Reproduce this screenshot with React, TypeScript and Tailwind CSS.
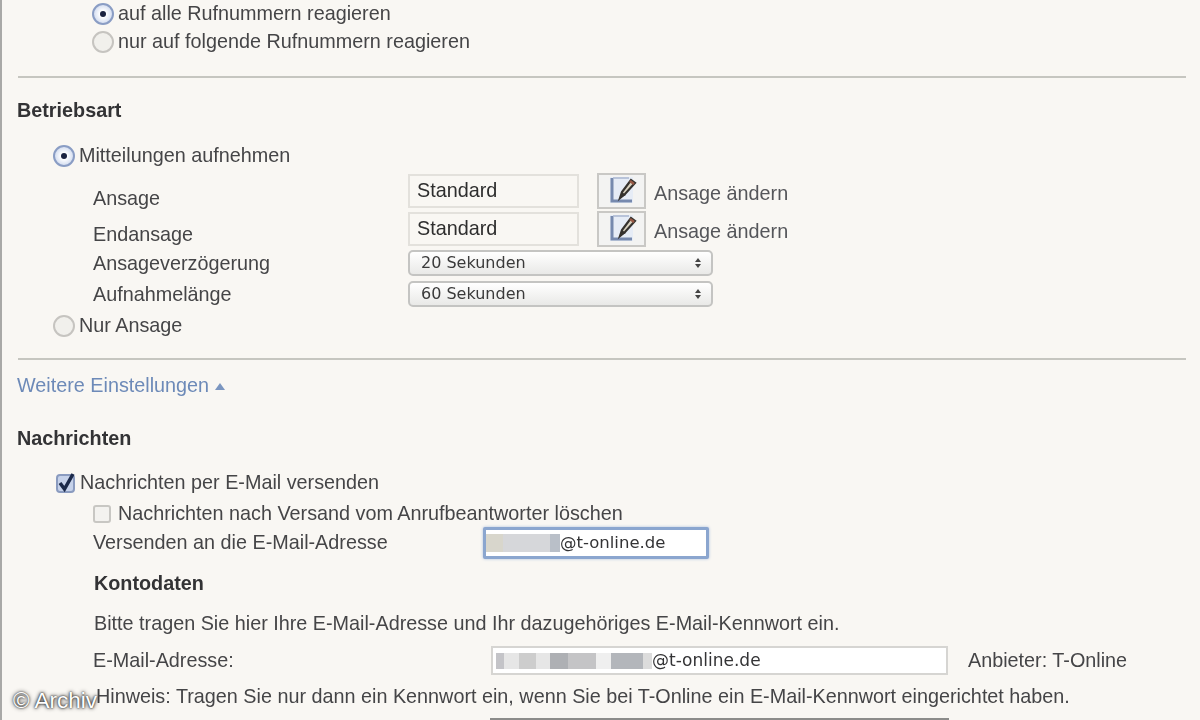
import type { ReactNode } from 'react';

const font = 'font-["Liberation_Sans",Arial,sans-serif]';

function Radio({ on }: { on?: boolean }) {
  if (on) {
    return (
      <span className="flex h-[22px] w-[22px] shrink-0 items-center justify-center rounded-full border-2 border-[#8a9dc4] bg-[radial-gradient(circle,#ffffff_25%,#bccbe8_100%)]">
        <span className="h-[6px] w-[6px] rounded-full bg-[#1b2340]" />
      </span>
    );
  }
  return <span className="h-[22px] w-[22px] shrink-0 rounded-full border-2 border-[#c6c4c0] bg-[#f1f0ec]" />;
}

function Divider() {
  return <div className="ml-4 mr-[14px] h-[2px] bg-[#c6c6c0]" />;
}

function Row({ className, children }: { className: string; children: ReactNode }) {
  return <div className={`flex items-center ${className}`}>{children}</div>;
}

function EditIcon() {
  return (
    <svg width="30" height="32" viewBox="0 0 30 32">
      <rect x="3" y="2" width="23" height="26" fill="#e6ecf6" />
      <path d="M5 3v23h20" fill="none" stroke="#7689ae" strokeWidth="3" />
      <path d="M6 3h16" stroke="#a9b6cf" strokeWidth="1.5" />
      <path d="M13 23l2-6L24 5l4 3-10 11z" fill="#d9d2c0" stroke="#35322e" strokeWidth="2.2" />
      <path d="M13 23l2-6 4 3z" fill="#35322e" />
      <path d="M23 6l4 3" stroke="#9a5a46" strokeWidth="2.5" />
    </svg>
  );
}

function AnsageRow({ label, labelClass, className }: { label: string; labelClass: string; className: string }) {
  return (
    <div className={`flex h-9 ${className}`}>
      <span className={`w-[406px] shrink-0 pl-[91px] ${labelClass}`}>{label}</span>
      <div className="mt-px flex h-[34px] w-[171px] items-center border-2 border-[#e3e1dc] pl-[7px] text-[#2e2e2e]">Standard</div>
      <div className="ml-[18px] flex h-9 w-[49px] items-center justify-center border-2 border-[#c9c8c5] bg-[#f3f3f2]">
        <EditIcon />
      </div>
      <span className="ml-[8px] flex h-9 items-center pt-[6px] text-[#55565a]">Ansage ändern</span>
    </div>
  );
}

function SelectRow({ label, value, className }: { label: string; value: string; className: string }) {
  return (
    <div className={`flex h-[26px] items-center ${className}`}>
      <span className="w-[406px] shrink-0 pl-[91px] pt-[2px]">{label}</span>
      <div className='flex h-[26px] w-[305px] items-center justify-between rounded-[5px] border-2 border-[#c4c4c2] bg-[linear-gradient(#ffffff,#e9e9e7)] pl-[11px] pr-[10px] font-["DejaVu_Sans",sans-serif] text-[16px] text-[#3a3a3a]'>
        <span>{value}</span>
        <span className="flex flex-col gap-[2px]">
          <span className="h-0 w-0 border-x-[3px] border-b-[4px] border-x-transparent border-b-[#444444]" />
          <span className="h-0 w-0 border-x-[3px] border-t-[4px] border-x-transparent border-t-[#444444]" />
        </span>
      </div>
    </div>
  );
}

function Mask({ className, blocks }: { className: string; blocks: [number, string][] }) {
  return (
    <span className={`flex shrink-0 ${className}`}>
      {blocks.map(([w, c], i) => (
        <span key={i} className="h-full" style={{ width: w, background: c }} />
      ))}
    </span>
  );
}

export default function App() {
  return (
    <div className="relative h-[720px] w-[1200px] overflow-hidden bg-[#f9f7f3]">
      <div className={`-ml-px h-full border-l-[3px] border-[#a9a9a7] ${font} text-[19.8px] text-[#454547] blur-[0.7px]`}>
        <Row className="h-7 gap-[4px] pl-[90px]"><Radio on /><span>auf alle Rufnummern reagieren</span></Row>
        <Row className="h-7 gap-[4px] pl-[90px]"><Radio /><span>nur auf folgende Rufnummern reagieren</span></Row>

        <div className="mt-5"><Divider /></div>
        <Row className="mt-[18px] h-[30px] pl-[15px] font-bold text-[#333335]">Betriebsart</Row>

        <Row className="mt-4 h-7 gap-[4px] pl-[51px]"><Radio on /><span>Mitteilungen aufnehmen</span></Row>

        <AnsageRow label="Ansage" labelClass="pt-[11px]" className="mt-[3px]" />
        <AnsageRow label="Endansage" labelClass="pt-[9px]" className="mt-[2px]" />
        <SelectRow label="Ansageverzögerung" value="20 Sekunden" className="mt-[3px]" />
        <SelectRow label="Aufnahmelänge" value="60 Sekunden" className="mt-[5px]" />

        <Row className="mt-[5px] h-7 gap-[4px] pl-[51px]"><Radio /><span>Nur Ansage</span></Row>

        <div className="mt-[18px]"><Divider /></div>

        <Row className="mt-[12px] h-7 gap-[6px] pl-[15px] text-[#6d8ab8]">
          <span>Weitere Einstellungen</span>
          <span className="h-0 w-0 border-x-[5px] border-b-[7px] border-x-transparent border-b-[#7b96c0]" />
        </Row>

        <Row className="mt-[25px] h-7 pl-[15px] font-bold text-[#333335]">Nachrichten</Row>

        <Row className="mt-4 h-7 gap-[5px] pl-[54px]">
          <span className="relative h-[19px] w-[19px] shrink-0 rounded-[4px] border-2 border-[#8a9bbf] bg-[#c6d2ea]">
            <svg className="absolute -left-px -top-[5px]" width="22" height="24" viewBox="0 0 22 24">
              <path d="M3 12l4.500 6L16 3" fill="none" stroke="#1c2a4a" strokeWidth="3.500" />
            </svg>
          </span>
          <span>Nachrichten per E-Mail versenden</span>
        </Row>
        <Row className="mt-1 h-[26px] gap-[7px] pl-[91px]">
          <span className="h-[18px] w-[18px] shrink-0 rounded-[3px] border-2 border-[#c8c7c3] bg-[#f3f2ef]" />
          <span>Nachrichten nach Versand vom Anrufbeantworter löschen</span>
        </Row>
        <Row className="h-8">
          <span className="w-[481px] shrink-0 pl-[91px]">Versenden an die E-Mail-Adresse</span>
          <div className="flex h-8 w-[226px] items-center rounded-[2px] border-[3px] border-[#8ba6cf] bg-white text-[#333335] shadow-[0_0_3px_#a9bede]">
            <Mask className="h-[18px]" blocks={[[17, '#d8d6cc'], [47, '#d6d7da'], [10, '#b9bfc8']]} />
            <span className='font-["DejaVu_Sans",sans-serif] text-[16.5px]'>@t-online.de</span>
          </div>
        </Row>

        <Row className="mt-[11px] h-7 pl-[92px] font-bold text-[#333335]">Kontodaten</Row>
        <Row className="mt-3 h-7 pl-[92px]">Bitte tragen Sie hier Ihre E-Mail-Adresse und Ihr dazugehöriges E-Mail-Kennwort ein.</Row>

        <Row className="mt-2 h-[29px]">
          <span className="w-[489px] shrink-0 pl-[91px] pt-px">E-Mail-Adresse:</span>
          <div className="flex h-[29px] w-[457px] items-center border-2 border-[#d6d5d2] bg-white pl-[3px] text-[#333335]">
            <Mask className="h-[16px]" blocks={[[8, '#c4c4c8'], [15, '#e6e6e6'], [17, '#cdcdcd'], [14, '#e6e6e6'], [18, '#aeb0b4'], [28, '#c4c4c6'], [15, '#efefef'], [32, '#b3b6bb'], [9, '#dcdcdc']]} />
            <span className='font-["DejaVu_Sans",sans-serif] text-[17px]'>@t-online.de</span>
          </div>
          <span className="ml-[20px] whitespace-nowrap">Anbieter: T-Online</span>
        </Row>

        <Row className="mt-2 h-7 whitespace-nowrap pl-[94px]">Hinweis: Tragen Sie nur dann ein Kennwort ein, wenn Sie bei T-Online ein E-Mail-Kennwort eingerichtet haben.</Row>
        <div className="ml-[488px] mt-[7px] h-[2px] w-[459px] bg-[#8c8c8a]" />
      </div>

      <span className='absolute left-[13px] top-[684px] font-["Liberation_Sans",sans-serif] text-[22.5px] text-white [text-shadow:0_0_4px_#111111,0_0_2px_#111111]'>© Archiv</span>
    </div>
  );
}
